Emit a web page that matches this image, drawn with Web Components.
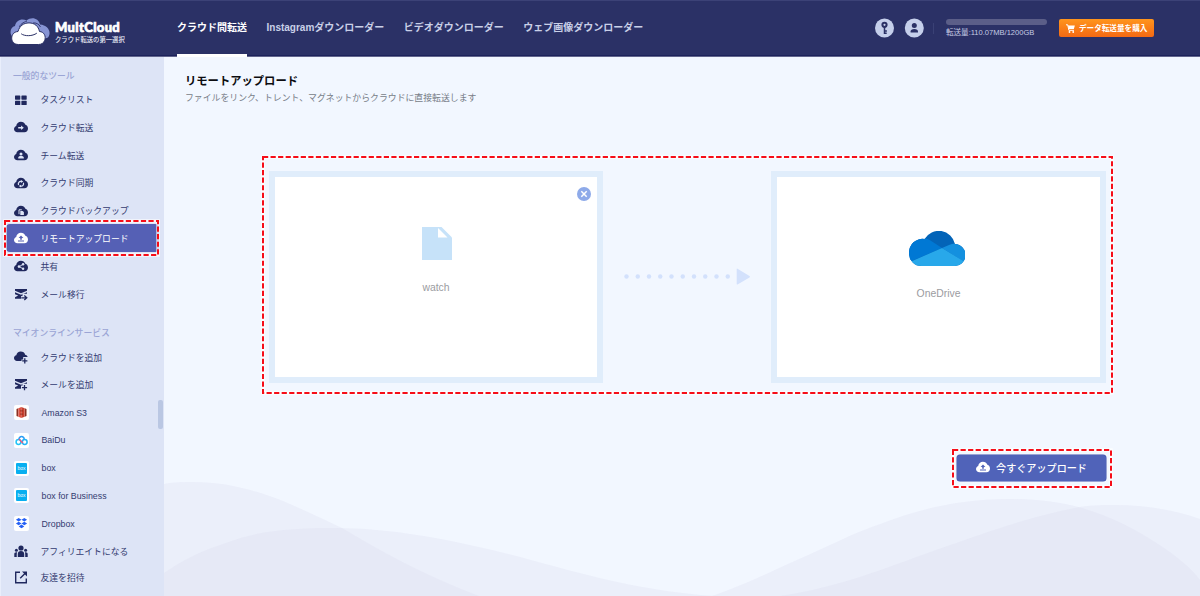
<!DOCTYPE html>
<html lang="ja">
<head>
<meta charset="utf-8">
<title>MultCloud</title>
<style>
  html, body { margin: 0; height: 100%; overflow: hidden; }
  body {
    font-family: "Liberation Sans", "Noto Sans CJK JP", sans-serif;
    font-size: 8.8px;
    color: #3a4173;
  }
</style>
</head>
<body>
<cloud-app>
  <top-bar slot="header">
    <nav-tab active>クラウド間転送</nav-tab>
    <nav-tab>Instagramダウンローダー</nav-tab>
    <nav-tab>ビデオダウンローダー</nav-tab>
    <nav-tab>ウェブ画像ダウンローダー</nav-tab>
  </top-bar>
  <side-bar slot="sidebar">
    <side-heading>一般的なツール</side-heading>
    <side-item icon="grid">タスクリスト</side-item>
    <side-item icon="transfer">クラウド転送</side-item>
    <side-item icon="team">チーム転送</side-item>
    <side-item icon="sync">クラウド同期</side-item>
    <side-item icon="backup">クラウドバックアップ</side-item>
    <side-item icon="upload" active>リモートアップロード</side-item>
    <side-item icon="share">共有</side-item>
    <side-item icon="mailmove">メール移行</side-item>
    <side-heading class="second">マイオンラインサービス</side-heading>
    <side-item icon="cloudadd">クラウドを追加</side-item>
    <side-item icon="mailadd">メールを追加</side-item>
    <side-item icon="s3" tile>Amazon S3</side-item>
    <side-item icon="baidu" tile>BaiDu</side-item>
    <side-item icon="box" tile>box</side-item>
    <side-item icon="box" tile>box for Business</side-item>
    <side-item icon="dropbox" tile>Dropbox</side-item>
    <side-item icon="people">アフィリエイトになる</side-item>
    <side-item icon="invite" class="last">友達を招待</side-item>
  </side-bar>
  <upload-page>
    <span slot="title">リモートアップロード</span>
    <span slot="description">ファイルをリンク、トレント、マグネットからクラウドに直接転送します</span>
    <drive-card slot="source" icon="file" closable>watch</drive-card>
    <drive-card slot="target" icon="onedrive">OneDrive</drive-card>
    <span slot="action">今すぐアップロード</span>
  </upload-page>
</cloud-app>

<script>
const cloud = '<path d="M3.400 11.300C1.500 11.300 0 9.900 0 8.100 0 6.600.9 5.400 2.200 4.900 2.500 2.500 4.500.8 6.900.8 9 .8 10.600 1.900 11.400 3.700 12.900 4.100 14 5.500 14 7.500 14 9.700 12.500 11.300 10.500 11.300z" fill="currentColor"/>'

const envelope = '<path d="M1 1h12v1.800L7 5.200 1 2.800z M1 4.200l6 2.500 6-2.500v1.500H8.500v5H1V9.200l3.200-1.700L1 6.200z" fill="currentColor"/>'

const icons = {
  grid: '<svg width="15" height="12" viewBox="0 0 15 12"><g fill="currentColor"><rect x="1" y="1.500" width="5.300" height="4.200" rx=".6"/><rect x="7.400" y="1.500" width="5.300" height="4.200" rx=".6"/><rect x="1" y="6.800" width="5.300" height="4.200" rx=".6"/><rect x="7.400" y="6.800" width="5.300" height="4.200" rx=".6"/></g></svg>',
  transfer: `<svg width="15" height="12" viewBox="0 0 15 12">${cloud}<path d="M4.200 5.900h2.900V4.400L9.800 6.700 7.100 9V7.500H4.200z" fill="var(--cut)"/></svg>`,
  team: `<svg width="15" height="12" viewBox="0 0 15 12">${cloud}<circle cx="7" cy="5" r="1.500" fill="var(--cut)"/><path d="M4.200 9.400v-.7c0-1.200 1-1.700 2.800-1.700s2.800.5 2.800 1.700v.7z" fill="var(--cut)"/></svg>`,
  sync: `<svg width="15" height="12" viewBox="0 0 15 12">${cloud}<path d="M4.600 8A2.500 2.500 0 0 1 7.400 4.400M9.400 5.800A2.500 2.500 0 0 1 6.600 9.200" fill="none" stroke="var(--cut)" stroke-width="1.200"/><path d="M6.900 2.900l2.400 1.600-2.400 1.400zM7.100 7.700v2.900L4.700 9z" fill="var(--cut)"/></svg>`,
  backup: `<svg width="15" height="12" viewBox="0 0 15 12">${cloud}<path d="M5 9.200V4.800h2.800" fill="none" stroke="var(--cut)"/><path d="M6.300 5.900h2.300l1.300 1.200v2.900H6.300z" fill="var(--cut)"/></svg>`,
  upload: `<svg width="15" height="12" viewBox="0 0 15 12">${cloud}<path d="M7 3.400l2.400 2.600H7.800v1.800H6.200V6H4.600zM4 8.600h6v1H4z" fill="var(--cut)"/></svg>`,
  share: `<svg width="15" height="12" viewBox="0 0 15 12">${cloud}<path d="M9 4.400L5.200 6.600 9 8.800" fill="none" stroke="var(--cut)" stroke-width=".9"/><g fill="var(--cut)"><circle cx="9.100" cy="4.300" r="1.200"/><circle cx="5" cy="6.600" r="1.300"/><circle cx="9.100" cy="8.800" r="1.200"/></g></svg>`,
  mailmove: `<svg width="15" height="13" viewBox="0 0 15 13">${envelope}<path d="M7 9.800h6" stroke="var(--cut)" stroke-width="3.400"/><path d="M7.300 9.800h4.600M10.300 7.500l2.500 2.300-2.500 2.300" fill="none" stroke="currentColor" stroke-width="1.300"/></svg>`,
  cloudadd: '<svg width="15" height="13" viewBox="0 0 15 13"><path d="M3 9.900C1.300 9.900 0 8.700 0 7 0 5.600 1 4.500 2.300 4.200 2.700 1.900 4.400.5 6.700.5c2.300 0 4 1.200 4.400 3.200 1.300.3 2.200 1.100 2.600 2.400H9.200v2.300H7.500v1.500z" fill="currentColor"/><path d="M10.800 7.200v5.200M8.200 9.800h5.200" stroke="currentColor" stroke-width="1.300"/></svg>',
  mailadd: `<svg width="15" height="13" viewBox="0 0 15 13">${envelope}<path d="M7 9.600h6" stroke="var(--cut)" stroke-width="4"/><path d="M10.500 7v5.200M7.900 9.600h5.200" stroke="currentColor" stroke-width="1.300"/></svg>`,
  s3: '<svg width="15" height="15" viewBox="0 0 15 15"><path d="M2.500 4l1.800-.8v8.500l-1.800-.8zM12.500 4l-1.800-.8v8.500l1.800-.8z" fill="#8c3123"/><path d="M4.400 3.200L7.300 2v11l-2.900-1.300z" fill="#e05243"/><path d="M10.600 3.200L7.300 2v11l3.300-1.300z" fill="#c9402e"/><path d="M6 5.900h3M6 9.100h3" stroke="#7a2419" stroke-width=".7"/></svg>',
  baidu: '<svg width="15" height="15" viewBox="0 0 15 15" fill="none" stroke-width="1.500"><circle cx="4.500" cy="9" r="2.400" stroke="#22c3f7"/><circle cx="10.700" cy="9" r="2.400" stroke="#22b4f7"/><path d="M5 6.200a2.600 2.600 0 1 1 5.200 0" stroke="#2b9df5"/><path d="M5.200 5.800c.4 1.700 2.600 2.700 3.500 4.200" stroke="#f0567c"/></svg>',
  box: '<svg width="15" height="15" viewBox="0 0 15 15"><rect x="2" y="2" width="11" height="11" rx="1" fill="#08aff0"/><text x="7.500" y="9.300" text-anchor="middle" font-size="5" font-weight="400" fill="#fff">box</text></svg>',
  dropbox: '<svg width="15" height="15" viewBox="0 0 15 15"><path d="M4.700 1.900L7.500 3.700 4.700 5.500 1.900 3.700zM10.300 1.900l2.800 1.800-2.800 1.800-2.800-1.800zM4.700 5.700l2.800 1.800-2.800 1.800-2.800-1.800zM10.300 5.700l2.800 1.800-2.800 1.800-2.800-1.800zM7.500 8.600l2.800 1.800-2.800 1.900-2.800-1.900z" fill="#2560f5"/></svg>',
  people: '<svg width="15" height="13" viewBox="0 0 15 13"><g fill="currentColor"><circle cx="7" cy="3" r="2.600"/><circle cx="2.400" cy="5.300" r="1.500"/><circle cx="11.600" cy="5.300" r="1.500"/><path d="M3.800 12V9c0-1.900 1.200-2.900 3.200-2.900s3.200 1 3.200 2.900v3zM.3 12V9.200c0-1.500 1.100-2.200 2.800-1.900-.3.900-.4 2.700-.3 4.700zM13.700 12V9.200c0-1.500-1.100-2.200-2.800-1.900.3.900.4 2.700.3 4.700z"/></g></svg>',
  invite: '<svg width="15" height="13" viewBox="0 0 15 13"><path d="M6 1.200H1.700v10.600h10.600V7.500M6.200 7.300L12 1.500" fill="none" stroke="currentColor" stroke-width="1.400"/><path d="M8 .5h5v5z" fill="currentColor"/></svg>',
  file: '<svg width="30" height="33" viewBox="0 0 30 33"><path d="M0 0h19.500L30 10.500V33H0z" fill="#c6e2f9"/><path d="M16 1l9.500 9.500H16z" fill="#fff"/></svg>',
  onedrive: `<svg width="56" height="35" viewBox="0 0 56 35">
    <clipPath id="c"><path d="M12.500 35A12.500 12.500 0 0 1 0 22 13.500 13.500 0 0 1 15.500 8 16.600 16.600 0 0 1 46 13 11 11 0 0 1 45 35z"/></clipPath>
    <g clip-path="url(#c)"><path d="M0 0h56v35H0z" fill="#0364b8"/>
    <path d="M0 7h13c4 0 6 .9 8.500 2.500L33 17 2.500 30H0z" fill="#0078d4"/>
    <path d="M33 17l7-3c4-2 8-2 11 0l7 7v9h-4z" fill="#1490df"/>
    <path d="M33 17L2 30.500V36h54v-5z" fill="#28a8ea"/></g></svg>`
}

const attach = (element, html) => {
  element.attachShadow({ mode: 'open' }).innerHTML = html
  return element.shadowRoot
}

customElements.define('cloud-app', class extends HTMLElement {
  constructor () {
    super()
    attach(this, `
      <style>
        :host { display: grid; grid-template: 57px 1fr / 164px 1fr; width: 1200px; height: 596px; }
        slot[name=header] { display: block; grid-column: 1 / 3; }
        slot[name=sidebar] { display: block; }
      </style>
      <slot name="header"></slot><slot name="sidebar"></slot><slot></slot>`)
  }
})

/* A dashed marker laid over its nearest positioned ancestor. */
customElements.define('dash-frame', class extends HTMLElement {
  constructor () {
    super()
    attach(this, `
      <style>
        :host { display: block; position: absolute; pointer-events: none; z-index: 2; }
        svg { display: block; width: 100%; height: 100%; overflow: visible; }
        rect { x: 1px; y: 1px; width: calc(100% - 2px); height: calc(100% - 2px); fill: none; }
      </style>
      <svg><rect stroke="#fff" stroke-opacity=".75" stroke-width="3.500"/><rect stroke="#f60d18" stroke-width="2" stroke-dasharray="5.200 2.350"/></svg>`)
  }
})

customElements.define('top-bar', class extends HTMLElement {
  constructor () {
    super()
    attach(this, `
      <style>
        :host {
          display: flex; height: 57px; box-sizing: border-box; color: #fff;
          background: linear-gradient(#3c4277 1px, #2b3166 1px, #2b3166 55px, #1c225b 55px, #1c225b 56px, #62658d 56px);
        }
        .brand { display: flex; width: 167px; padding: 18px 0 0 10px; box-sizing: border-box; }
        .brand svg { flex: none; margin-right: 5px; }
        .name { font: 900 13px/13px Lato, sans-serif; letter-spacing: .35px; white-space: nowrap; padding-top: 3px; -webkit-text-stroke: .7px #fff; }
        .tag { font-size: 6.350px; line-height: 8px; padding-top: 2px; white-space: nowrap; color: #e8eaf5; font-weight: 500; }
        nav { display: flex; gap: 19.500px; padding-left: 10px; }
        .tools { display: flex; align-items: flex-start; margin-left: auto; padding-right: 46px; }
        .round { margin: 18px 10px 0 0; }
        .rule { width: 1px; height: 11px; margin: 23px 12px 0 -1px; background: #3a4175; }
        .usage { width: 113px; padding-top: 19px; font-size: 7.550px; line-height: 10px; color: #c6cce4; white-space: nowrap; }
        .bar { width: 101px; height: 6px; border-radius: 3px; background: #5b5e88; margin-bottom: 3px; }
        .buy {
          display: flex; align-items: center; box-sizing: border-box; width: 95px; height: 18px; margin-top: 19px; padding-left: 7px; gap: 4px;
          border-radius: 2px; background: linear-gradient(#ff951d, #f46913); font-size: 7.600px; font-weight: 700; white-space: nowrap;
        }
        .buy span { position: relative; top: -1px; }
      </style>
      <div class="brand">
        <svg width="40" height="28" viewBox="0 0 40 28">
          <path d="M3 20C-1 16 0 9 5 8 6 2 12 0 16.500 2.500c5-4 12-2.500 13.500 4C38 7 42 14 38 19.500L34 21z" fill="#8794d4"/>
          <path d="M9.500 9C10 6.500 13 4.500 17 3M23 5c3-.5 6 1 7.500 4" fill="none" stroke="#2b3166" stroke-width=".9"/>
          <path d="M8.500 26.500C-.5 26.500-.5 14 8 13.500 9.500 8 13.500 4.900 19 4.900s9.300 3.100 10.500 8.600C37.500 14 37 26.500 28.500 26.500z" fill="#fff" stroke="#2b3166" stroke-width="1"/>
          <path d="M11.500 16c3 2.400 11 2.400 15-.6" fill="none" stroke="#2b3166" stroke-width="1" stroke-linecap="round"/>
        </svg>
        <div><div class="name">MultCloud</div><div class="tag">クラウド転送の第一選択</div></div>
      </div>
      <nav><slot></slot></nav>
      <div class="tools">
        <svg class="round" width="20" height="20" viewBox="0 0 20 20"><circle cx="10.500" cy="10" r="9.500" fill="#c5cfeb"/><path d="M10.500 8v8M10.500 13h2.400M10.500 15.300h2.200" stroke="#2b3166" stroke-width="1.500"/><circle cx="10.500" cy="6.800" r="2.100" fill="none" stroke="#2b3166" stroke-width="2"/></svg>
        <svg class="round" width="20" height="20" viewBox="0 0 20 20"><circle cx="10.300" cy="10" r="9.500" fill="#c5cfeb"/><circle cx="10.300" cy="7.600" r="2.500" fill="#2b3166"/><path d="M6.600 14.500v-.9c0-1.900 1.300-2.700 3.700-2.700s3.700.8 3.700 2.700v.9z" fill="#2b3166"/></svg>
        <div class="rule"></div>
        <div class="usage"><div class="bar"></div>転送量:110.07MB/1200GB</div>
        <div class="buy">
          <svg width="9" height="9" viewBox="0 0 9 9"><path d="M0 .8h1.700l1.200 5.500H8" fill="none" stroke="#fff" stroke-width="1"/><path d="M2 1.600h6.800L7.900 5H2.800z" fill="#fff"/><circle cx="3.500" cy="8" r=".9" fill="#fff"/><circle cx="7.200" cy="8" r=".9" fill="#fff"/></svg>
          <span>データ転送量を購入</span>
        </div>
      </div>`)
  }
})

customElements.define('nav-tab', class extends HTMLElement {
  constructor () {
    super()
    attach(this, `
      <style>
        :host { display: block; box-sizing: border-box; height: 57px; padding-top: 20px; font-size: 10px; line-height: 15px; font-weight: 600; color: #c9d0e8; white-space: nowrap; }
        :host([active]) { color: #fff; font-weight: 700; border-bottom: 3px solid #fff; }
      </style>
      <slot></slot>`)
  }
})

customElements.define('side-bar', class extends HTMLElement {
  constructor () {
    super()
    attach(this, `
      <style>
        :host { display: block; position: relative; box-sizing: border-box; height: 539px; padding-top: 12px; background: #dde4f6; border-left: 1px solid #e9eefb; }
        .thumb { position: absolute; right: 1px; top: 343px; width: 5px; height: 29px; border-radius: 2px; background: #bac7e3; }
      </style>
      <slot></slot><div class="thumb"></div>`)
  }
})

customElements.define('side-heading', class extends HTMLElement {
  constructor () {
    super()
    attach(this, `
      <style>
        :host { display: block; height: 16.700px; line-height: 14px; padding-left: 12px; color: #9ba5d5; font-weight: 500; }
        :host(.second) { margin-top: 18.300px; height: 17px; }
      </style>
      <slot></slot>`)
  }
})

customElements.define('side-item', class extends HTMLElement {
  connectedCallback () {
    if (this.shadowRoot) return
    attach(this, `
      <style>
        :host {
          --cut: #dde4f6;
          display: flex; align-items: center; position: relative; box-sizing: border-box;
          height: 27.750px; padding-left: 13px; color: #333b70; white-space: nowrap;
        }
        .pic { display: flex; flex: none; width: 15px; height: 15px; align-items: center; margin-right: 11.500px; color: #20285e; }
        :host([tile]) .pic { background: #fff; border-radius: 2px; }
        :host([tile]) .text { padding-left: 1px; }
        :host([active]) { --cut: #5560b5; height: 28px; margin: 0 5px; padding-left: 8px; border-radius: 4px; background: #5560b5; color: #fff; }
        :host([active]) .pic { color: #fff; }
        dash-frame { left: -2px; right: 0; top: -4px; bottom: -4px; }
        :host(.last) { height: 24px; }
      </style>
      <span class="pic">${icons[this.getAttribute('icon')]}</span>
      <span class="text"><slot></slot></span>
      ${this.hasAttribute('active') ? '<dash-frame></dash-frame>' : ''}`)
  }
})

customElements.define('drive-card', class extends HTMLElement {
  connectedCallback () {
    if (this.shadowRoot) return
    const icon = this.getAttribute('icon')
    attach(this, `
      <style>
        :host {
          display: flex; flex-direction: column; align-items: center; position: relative; box-sizing: border-box;
          width: 334px; height: 212px; border: 6px solid #e0edfb; background: #fff;
          padding-top: ${icon === 'file' ? 50 : 54}px; color: #9b9c9f; font-size: 10.400px; line-height: 14px;
        }
        .pic { height: ${icon === 'file' ? 54 : 56}px; }
        .pic svg { display: block; }
        :host([icon=file]) .pic { margin-left: 1px; }
        :host([icon=onedrive]) { width: 335px; }
        :host([icon=onedrive]) .pic { margin-right: 4px; }
        .close { position: absolute; top: 10px; right: 6px; }
      </style>
      <div class="pic">${icons[icon]}</div>
      <slot></slot>
      ${this.hasAttribute('closable') ? '<svg class="close" width="14" height="14" viewBox="0 0 14 14"><circle cx="7" cy="7" r="7" fill="#8eaae9"/><path d="M4.300 4.300l5.400 5.400M9.700 4.300L4.300 9.700" stroke="#fff" stroke-width="1.500"/></svg>' : ''}`)
  }
})

customElements.define('upload-page', class extends HTMLElement {
  constructor () {
    super()
    const dots = Array.from({ length: 10 }, (_, i) => `<circle cx="${2.500 + i * 11.250}" cy="8.500" r="2.200"/>`).join('')
    attach(this, `
      <style>
        :host { display: block; position: relative; height: 539px; overflow: hidden; background: #f2f7ff; }
        .waves { position: absolute; left: 0; bottom: 0; }
        .content { position: relative; display: flow-root; }
        h1 { margin: 15px 0 0 21px; font-size: 11.300px; line-height: 18px; font-weight: 700; color: #0c0c10; }
        p { margin: 1px 0 0 21px; font-size: 8.870px; line-height: 14px; color: #777d87; }
        .stage {
          position: relative; display: flex; justify-content: space-between; box-sizing: border-box;
          width: 851px; height: 238px; margin: 51px 0 0 98px; padding: 15px 7px 0;
        }
        .arrow { margin-top: 97px; }
        dash-frame { inset: 0; }
        .action { position: relative; box-sizing: border-box; width: 160px; height: 39px; margin: 55px 0 0 788px; padding: 6px 5px; }
        button {
          --cut: #5063b9;
          display: flex; align-items: center; justify-content: center; gap: 5px; width: 149px; height: 26px; padding: 0 0 2px;
          border: 0; border-radius: 3px; background: #5063b9; color: #fff; font: inherit; font-size: 10.100px; font-weight: 500;
          box-shadow: 0 0 0 .5px #3f50a9;
        }
      </style>
      <svg class="waves" width="1036" height="126" viewBox="164 470 1036 126" fill="#d6d9ec" fill-opacity=".25">
        <path d="M164 484C174 482 184 482 193 482C225 482 255 490 283 501C304 510 323 519 342 528C380 551 420 573 479 596H164z"/>
        <path d="M164 573C180 562 200 551 226 543C257 531 290 528 334 528C390 528 446 539 492 550C564 567 620 589 714 596H164z"/>
        <path d="M712 596C744 585 768 573 797 560C830 546 850 534 883 523C920 509 960 499 1009 499C1034 499 1060 502 1082 508C1112 517 1135 529 1155 542C1177 556 1192 569 1200 580V596z"/>
        <path d="M780 596C840 587 880 570 936 550C985 533 1025 518 1075 508C1088 505 1102 505 1115 505C1144 505 1175 510 1200 519V596z"/>
      </svg>
      <div class="content">
        <h1><slot name="title"></slot></h1>
        <p><slot name="description"></slot></p>
        <div class="stage">
          <slot name="source"></slot>
          <svg class="arrow" width="127" height="18" viewBox="0 0 127 18" fill="#d3e1fc">${dots}<path d="M113.500.7l12 7.300q1 .7 0 1.400l-12 7q-.8.400-.8-.7V1.200q0-.8.800-.5z"/></svg>
          <slot name="target"></slot>
          <dash-frame></dash-frame>
        </div>
        <div class="action">
          <button>${icons.upload}<slot name="action"></slot></button>
          <dash-frame></dash-frame>
        </div>
      </div>`)
  }
})
</script>
</body>
</html>
